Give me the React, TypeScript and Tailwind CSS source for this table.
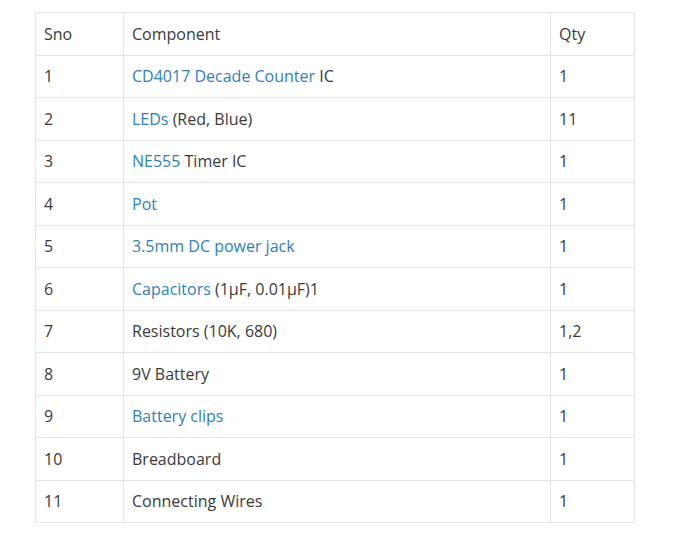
import React from 'react';

type Part = { text: string; link?: boolean };
type Row = { sno: string; parts: Part[]; qty: string };

const rows: Row[] = [
  { sno: '1', parts: [{ text: 'CD4017 Decade Counter', link: true }, { text: ' IC' }], qty: '1' },
  { sno: '2', parts: [{ text: 'LEDs', link: true }, { text: ' (Red, Blue)' }], qty: '11' },
  { sno: '3', parts: [{ text: 'NE555', link: true }, { text: ' Timer IC' }], qty: '1' },
  { sno: '4', parts: [{ text: 'Pot', link: true }], qty: '1' },
  { sno: '5', parts: [{ text: '3.5mm DC power jack', link: true }], qty: '1' },
  { sno: '6', parts: [{ text: 'Capacitors', link: true }, { text: ' (1µF, 0.01µF)1' }], qty: '1' },
  { sno: '7', parts: [{ text: 'Resistors (10K, 680)' }], qty: '1,2' },
  { sno: '8', parts: [{ text: '9V Battery' }], qty: '1' },
  { sno: '9', parts: [{ text: 'Battery clips', link: true }], qty: '1' },
  { sno: '10', parts: [{ text: 'Breadboard' }], qty: '1' },
  { sno: '11', parts: [{ text: 'Connecting Wires' }], qty: '1' },
];

const cell = 'border border-[#e3e3e3] px-2 align-middle text-left font-normal';

export default function App() {
  return (
    <div className="min-h-[545px] w-[674px] bg-white pt-3 pl-[35px] font-['Open_Sans',sans-serif] text-[16px] text-[#3a3a3a]">
      <table className="w-[599px] table-fixed border-collapse">
        <colgroup>
          <col className="w-[88px]" />
          <col className="w-[427px]" />
          <col className="w-[84px]" />
        </colgroup>
        <thead>
          <tr className="h-[42.5px]">
            <th className={cell}>Sno</th>
            <th className={cell}>Component</th>
            <th className={cell}>Qty</th>
          </tr>
        </thead>
        <tbody>
          {rows.map((r) => (
            <tr key={r.sno} className="h-[42.5px]">
              <td className={cell}>{r.sno}</td>
              <td className={cell}>
                {r.parts.map((p, i) =>
                  p.link ? (
                    <a key={i} href="#" className="text-[#2f7fb8]">
                      {p.text}
                    </a>
                  ) : (
                    <span key={i}>{p.text}</span>
                  )
                )}
              </td>
              <td className={cell}>{r.qty}</td>
            </tr>
          ))}
        </tbody>
      </table>
    </div>
  );
}
